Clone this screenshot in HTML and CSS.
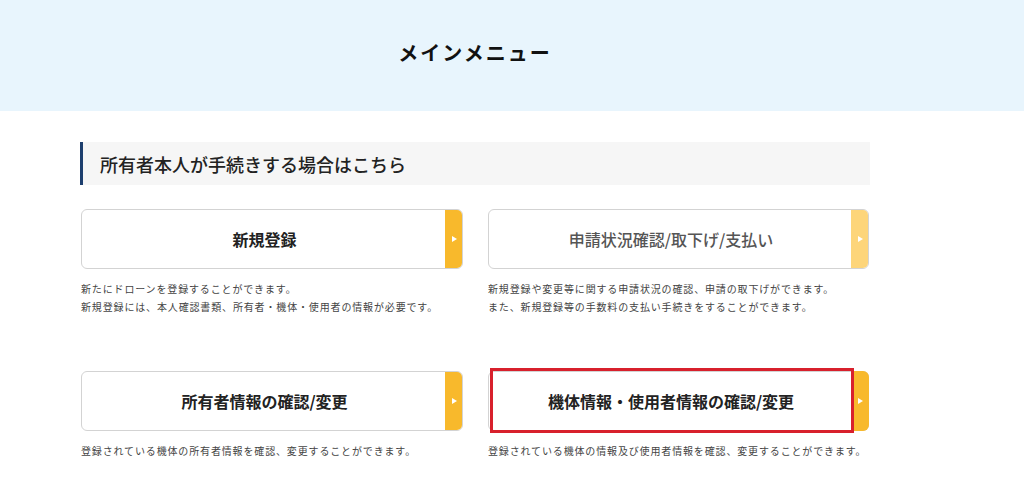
FILE: index.html
```html
<!DOCTYPE html>
<html lang="ja">
<head>
    <meta charset="UTF-8">
    <title>メインメニュー</title>
    <link rel="stylesheet" href="styles.css">
</head>
<body>
    <header class="page-header">
        <div class="wrap">
            <h1>メインメニュー</h1>
        </div>
    </header>

    <main class="wrap">
        <h2 class="section-title">所有者本人が手続きする場合はこちら</h2>

        <div class="menu-grid">
            <div class="menu-item">
                <a class="menu-btn" href="#">
                    <span class="menu-label">新規登録</span>
                    <span class="menu-arrow"></span>
                </a>
                <p class="menu-desc">新たにドローンを登録することができます。<br>新規登録には、本人確認書類、所有者・機体・使用者の情報が必要です。</p>
            </div>

            <div class="menu-item">
                <a class="menu-btn is-light" href="#">
                    <span class="menu-label">申請状況確認/取下げ/支払い</span>
                    <span class="menu-arrow"></span>
                </a>
                <p class="menu-desc">新規登録や変更等に関する申請状況の確認、申請の取下げができます。<br>また、新規登録等の手数料の支払い手続きをすることができます。</p>
            </div>

            <div class="menu-item">
                <a class="menu-btn" href="#">
                    <span class="menu-label">所有者情報の確認/変更</span>
                    <span class="menu-arrow"></span>
                </a>
                <p class="menu-desc">登録されている機体の所有者情報を確認、変更することができます。</p>
            </div>

            <div class="menu-item">
                <a class="menu-btn is-marked" href="#">
                    <span class="menu-label">機体情報・使用者情報の確認/変更</span>
                    <span class="menu-arrow"></span>
                </a>
                <p class="menu-desc">登録されている機体の情報及び使用者情報を確認、変更することができます。</p>
            </div>
        </div>
    </main>
</body>
</html>
```

FILE: styles.css
```css
body {
    margin: 0;
    font-family: "Noto Sans CJK JP", "Noto Sans", sans-serif;
    color: #222;
    background: #fff;
}
.wrap {
    width: 790px;
    margin-left: 80px;
}
.page-header {
    background: #e8f5fd;
    height: 111px;
}
.page-header .wrap {
    height: 100%;
    display: flex;
    align-items: center;
    justify-content: center;
}
.page-header h1 {
    margin: 0 0 6px;
    font-size: 20px;
    font-weight: bold;
    letter-spacing: 2px;
    color: #111;
}
.section-title {
    margin: 31px 0 0;
    height: 43px;
    box-sizing: border-box;
    display: flex;
    align-items: center;
    padding-left: 17px;
    border-left: 3px solid #1d3f6e;
    background: #f6f6f6;
    font-size: 18px;
    font-weight: 500;
    color: #222;
}
.menu-grid {
    display: grid;
    grid-template-columns: 382px 381px;
    column-gap: 25px;
    row-gap: 40px;
    margin-top: 24px;
    margin-left: 1px;
}
.menu-item {
    min-height: 122px;
}
.menu-btn {
    position: relative;
    display: flex;
    height: 60px;
    box-sizing: border-box;
    border: 1px solid #d3d3d3;
    border-radius: 6px;
    background: #fff;
    text-decoration: none;
    overflow: hidden;
}
.menu-label {
    flex: 1;
    display: flex;
    align-items: center;
    justify-content: center;
    padding-left: 2px;
    font-size: 16px;
    font-weight: bold;
    color: #222;
}
.menu-arrow {
    width: 18px;
    margin: -1px -1px -1px 0;
    background: #f8b92c;
    display: flex;
    align-items: center;
    justify-content: center;
}
.menu-arrow::after {
    content: "";
    border-left: 5px solid #fff;
    border-top: 3.5px solid transparent;
    border-bottom: 3.5px solid transparent;
}
.is-light .menu-arrow {
    background: #fdd57a;
}
.is-light .menu-label {
    color: #555;
    font-weight: 500;
}
.is-marked {
    overflow: visible;
}
.is-marked .menu-arrow {
    border-radius: 0 6px 6px 0;
}
.is-marked::before {
    content: "";
    position: absolute;
    left: 1px;
    top: -4px;
    width: 364px;
    height: 65px;
    box-sizing: border-box;
    border: 3px solid #d8202c;
}
.menu-desc {
    margin: 11px 0 0;
    font-size: 10px;
    line-height: 18px;
    letter-spacing: 0.85px;
    color: #444;
}
```
